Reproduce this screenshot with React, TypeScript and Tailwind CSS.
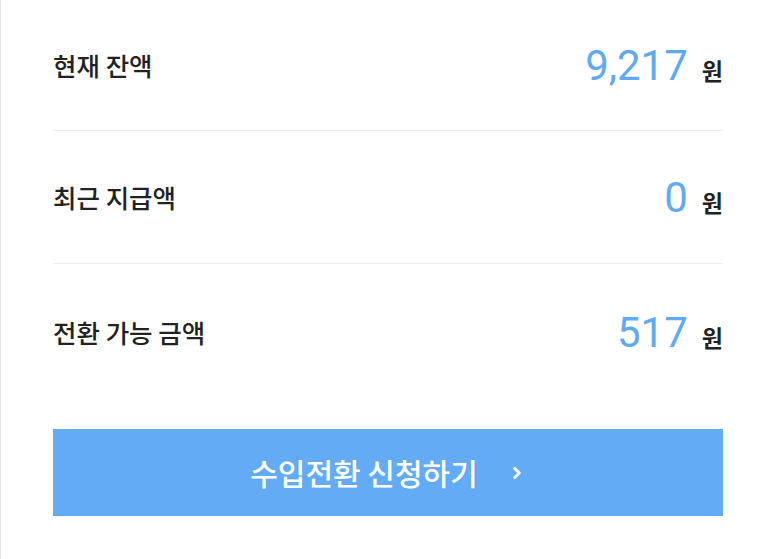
import { ChevronRight } from "lucide-react";

const rows = [
  { label: "현재 잔액", value: "9,217" },
  { label: "최근 지급액", value: "0" },
  { label: "전환 가능 금액", value: "517" },
];

export default function App() {
  return (
    <div className="min-h-[559px] w-[773px] border-l border-[#e4e4e4] bg-white font-['Noto_Sans_CJK_KR',sans-serif]">
      <div className="pl-[52px] pr-[50px]">
        {rows.map((row, i) => (
          <div
            key={row.label}
            className={
              i === 0
                ? "flex h-[131px] items-center justify-between border-b border-[#eeeeee]"
                : i === 1
                ? "flex h-[133px] items-center justify-between border-b border-[#eeeeee]"
                : "flex h-[136px] items-center justify-between"
            }
          >
            <span className="text-[25.5px] font-medium text-[#222222]">{row.label}</span>
            <span className="flex items-baseline gap-[14px]">
              <span className="font-['Roboto',sans-serif] text-[42px] text-[#62a9f5]">{row.value}</span>
              <span className="text-[23px] font-bold text-[#222222]">원</span>
            </span>
          </div>
        ))}
        <button className="mt-[29px] flex h-[87px] w-full items-center justify-center gap-[30px] bg-[#64abf5] text-white">
          <span className="text-[30px] font-medium">수입전환 신청하기</span>
          <ChevronRight size={18} strokeWidth={4} />
        </button>
      </div>
    </div>
  );
}
